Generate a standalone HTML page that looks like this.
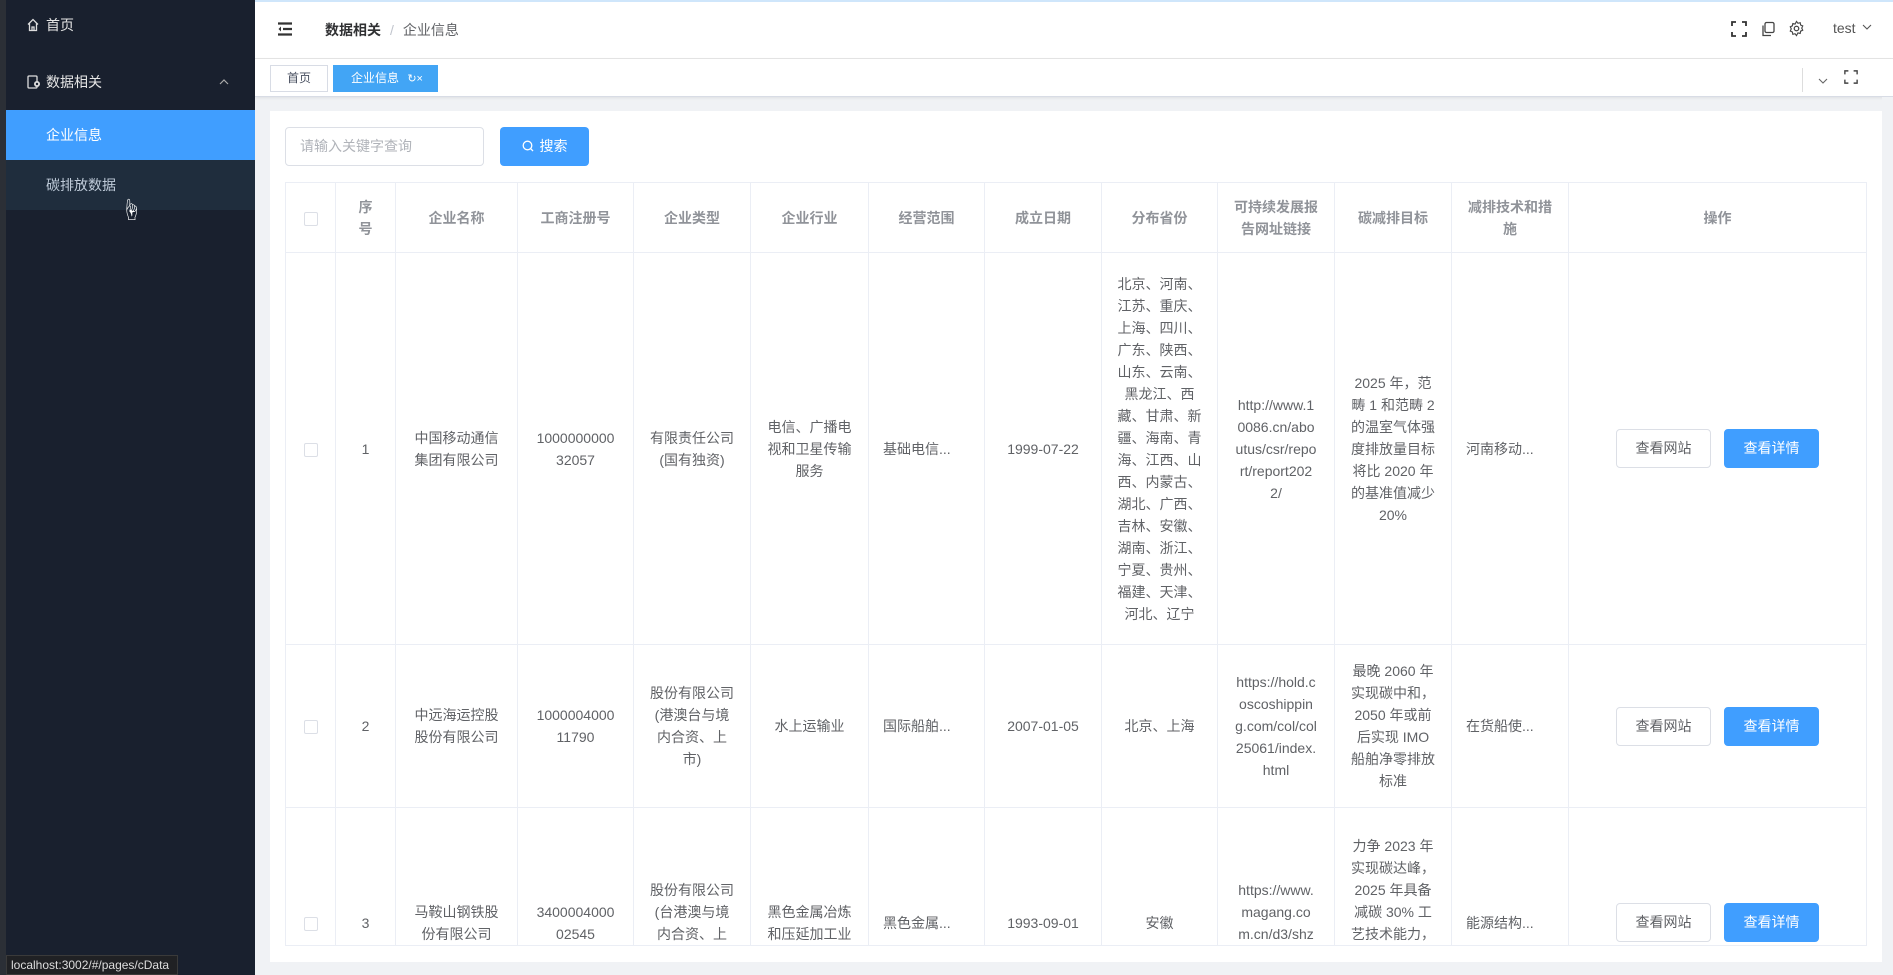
<!DOCTYPE html>
<html style="overflow:hidden"><head><meta charset="utf-8"><style>
*{box-sizing:border-box;margin:0;padding:0}
body{width:1893px;height:975px;overflow:hidden;background:#f0f2f5;font-family:"Liberation Sans","Noto Sans CJK SC",sans-serif;font-size:14px;color:#606266;position:relative}
.strip{position:absolute;left:0;top:0;width:6px;height:975px;background:#2b2f36}
.side{position:absolute;left:6px;top:0;width:249px;height:975px;background:#19202e;color:#bfcbd9}
.side .it{position:absolute;left:0;width:249px;height:50px;line-height:50px}
.hdr{position:absolute;left:255px;top:0;width:1638px;height:59px;background:#fff;border-top:2px solid #cfe6fb;border-bottom:1px solid #e6e6e6}
.tabs{position:absolute;left:255px;top:59px;width:1638px;height:38px;background:#fff;border-bottom:1px solid #d8dce5;box-shadow:0 1px 3px rgba(0,0,0,.08)}
.card{position:absolute;left:270px;top:111px;width:1612px;height:851px;background:#fff}
table{position:absolute;left:15px;top:71px;border-collapse:collapse;table-layout:fixed;width:1581px}
td,th{border:1px solid #ebeef5;text-align:center;vertical-align:middle;padding:9px 14px;line-height:22px;font-size:14px;font-weight:normal}
th{color:#909399;font-weight:bold;height:70px;padding:9px 14px}
.cb{display:inline-block;width:14px;height:14px;border:1px solid #dcdfe6;border-radius:2px;background:#fff;vertical-align:middle}
.b1,.b2{display:inline-block;width:95px;height:39px;line-height:37px;border-radius:4px;font-size:14px;vertical-align:middle}
.b1{border:1px solid #dcdfe6;color:#606266;background:#fff}
.b2{background:#409eff;color:#fff;border:1px solid #409eff;margin-left:13px}
.wrap{position:absolute;left:0;top:0;width:1612px;height:835px;overflow:hidden}
</style></head><body>
<div class="strip"></div>
<div class="side">
 <div class="it" style="top:0;padding-left:20px;color:#e6e6e6">
  <svg width="14" height="14" viewBox="0 0 14 14" style="vertical-align:-2px;margin-right:6px"><path d="M2 6.5L7 1.5L12 6.5M3.5 5V12.5H10.5V5M6 12.5V9H8V12.5" fill="none" stroke="#ddd" stroke-width="1.3"/></svg>首页</div>
 <div class="it" style="top:57px;padding-left:20px;color:#e6e6e6">
  <svg width="16" height="16" viewBox="0 0 16 16" style="vertical-align:-3px;margin-right:4px"><rect x="2" y="2" width="9" height="12" rx="1" fill="none" stroke="#ddd" stroke-width="1.3"/><circle cx="11" cy="10" r="3" fill="#ddd"/><circle cx="11" cy="10" r="1.2" fill="#19202e"/></svg>数据相关
  <span style="position:absolute;right:26px;top:0;font-size:11px;color:#aaa">
   <svg width="10" height="6" viewBox="0 0 10 6"><path d="M1 5L5 1L9 5" fill="none" stroke="#aaa" stroke-width="1.2"/></svg></span></div>
 <div class="it" style="top:110px;background:#409eff;color:#fff;padding-left:40px">企业信息</div>
 <div class="it" style="top:160px;background:#1f2d3d;color:#bfcbd9;padding-left:40px">碳排放数据</div>
</div>
<div style="position:absolute;left:120px;top:193px;font-size:22px;color:#fff">☝</div>
<div class="hdr">
 <svg width="16" height="14" viewBox="0 0 16 14" style="position:absolute;left:22px;top:20px"><path d="M1 1.5H15M6 7H15M1 12.5H15" stroke="#333" stroke-width="2.2"/><path d="M4 4.5L1.5 7L4 9.5Z" fill="#333"/></svg>
 <div style="position:absolute;left:70px;top:18px;font-size:14px;color:#303133"><b>数据相关</b><span style="color:#c0c4cc;margin:0 9px">/</span><span style="color:#606266">企业信息</span></div>
 <svg width="16" height="16" viewBox="0 0 16 16" style="position:absolute;left:1476px;top:19px"><path d="M1 5V1H5M11 1H15V5M15 11V15H11M5 15H1V11" fill="none" stroke="#333" stroke-width="1.8"/></svg>
 <svg width="16" height="16" viewBox="0 0 16 16" style="position:absolute;left:1505px;top:19px"><rect x="5" y="1.5" width="9" height="10" rx="1.5" fill="none" stroke="#444" stroke-width="1.3"/><path d="M3 4.5V14.5H11" fill="none" stroke="#444" stroke-width="1.3"/></svg>
 <svg width="17" height="17" viewBox="0 0 24 24" style="position:absolute;left:1533px;top:18px"><circle cx="12" cy="12" r="3.2" fill="none" stroke="#444" stroke-width="1.8"/><path d="M12 2l2 2.6 3.2-.8.6 3.2 3 1.4-1.4 3 1.4 3-3 1.4-.6 3.2-3.2-.8L12 22l-2-2.6-3.2.8-.6-3.2-3-1.4 1.4-3-1.4-3 3-1.4.6-3.2 3.2.8z" fill="none" stroke="#444" stroke-width="1.6"/></svg>
 <div style="position:absolute;left:1578px;top:18px;font-size:14px;color:#555">test <svg width="10" height="6" viewBox="0 0 10 6" style="vertical-align:3px;margin-left:3px"><path d="M1 1L5 5L9 1" fill="none" stroke="#555" stroke-width="1.1"/></svg></div>
</div>
<div class="tabs">
 <div style="position:absolute;left:15px;top:6px;width:58px;height:27px;border:1px solid #d8dce5;background:#fff;font-size:12px;color:#495060;text-align:center;line-height:25px">首页</div>
 <div style="position:absolute;left:78px;top:6px;width:105px;height:27px;background:#42a5f5;border:1px solid #42a5f5;font-size:12px;color:#fff;line-height:25px;padding-left:17px">企业信息 <span style="margin-left:5px;font-size:11px">↻×</span></div>
 <div style="position:absolute;left:1547px;top:9px;width:1px;height:24px;background:#ddd"></div>
 <svg width="10" height="6" viewBox="0 0 10 6" style="position:absolute;left:1563px;top:19px"><path d="M1 1L5 5L9 1" fill="none" stroke="#666" stroke-width="1.1"/></svg>
 <svg width="14" height="14" viewBox="0 0 16 16" style="position:absolute;left:1589px;top:11px"><path d="M1 5V1H5M11 1H15V5M15 11V15H11M5 15H1V11" fill="none" stroke="#444" stroke-width="1.6"/></svg>
</div>
<div class="card"><div class="wrap">
 <div style="position:absolute;left:15px;top:16px;width:199px;height:39px;border:1px solid #dcdfe6;border-radius:4px;padding-left:14px;line-height:37px;color:#b0b3b9;font-size:14px">请输入关键字查询</div>
 <div style="position:absolute;left:230px;top:16px;width:89px;height:39px;border-radius:4px;background:#409eff;color:#fff;line-height:39px;text-align:center;font-size:14px"><svg width="12" height="12" viewBox="0 0 12 12" style="vertical-align:-1px;margin-right:6px"><circle cx="5.5" cy="5.5" r="4.3" fill="none" stroke="#fff" stroke-width="1.3"/><path d="M8.6 8.6L11 11" stroke="#fff" stroke-width="1.3"/></svg>搜索</div>
 <table>
 <colgroup><col style="width:50px"><col style="width:60px"><col style="width:122px"><col style="width:116px"><col style="width:117px"><col style="width:118px"><col style="width:116px"><col style="width:117px"><col style="width:116px"><col style="width:117px"><col style="width:117px"><col style="width:117px"><col style="width:298px"></colgroup>
 <tr><th><span class="cb"></span></th><th>序<br>号</th><th>企业名称</th><th>工商注册号</th><th>企业类型</th><th>企业行业</th><th>经营范围</th><th>成立日期</th><th>分布省份</th><th>可持续发展报<br>告网址链接</th><th>碳减排目标</th><th>减排技术和措<br>施</th><th>操作</th></tr>
 <tr style="height:392px"><td><span class="cb"></span></td><td>1</td><td>中国移动通信<br>集团有限公司</td><td>1000000000<br>32057</td><td>有限责任公司<br>(国有独资)</td><td>电信、广播电<br>视和卫星传输<br>服务</td><td style="text-align:left">基础电信...</td><td>1999-07-22</td><td>北京、河南、<br>江苏、重庆、<br>上海、四川、<br>广东、陕西、<br>山东、云南、<br>黑龙江、西<br>藏、甘肃、新<br>疆、海南、青<br>海、江西、山<br>西、内蒙古、<br>湖北、广西、<br>吉林、安徽、<br>湖南、浙江、<br>宁夏、贵州、<br>福建、天津、<br>河北、辽宁</td><td style="padding:9px 6px">http://www.1<br>0086.cn/abo<br>utus/csr/repo<br>rt/report202<br>2/</td><td style="padding:9px 6px">2025 年，范<br>畴 1 和范畴 2<br>的温室气体强<br>度排放量目标<br>将比 2020 年<br>的基准值减少<br>20%</td><td style="text-align:left">河南移动...</td><td><span class="b1">查看网站</span><span class="b2">查看详情</span></td></tr>
 <tr style="height:163px"><td><span class="cb"></span></td><td>2</td><td>中远海运控股<br>股份有限公司</td><td>1000004000<br>11790</td><td>股份有限公司<br>(港澳台与境<br>内合资、上<br>市)</td><td>水上运输业</td><td style="text-align:left">国际船舶...</td><td>2007-01-05</td><td>北京、上海</td><td style="padding:9px 6px">https://hold.c<br>oscoshippin<br>g.com/col/col<br>25061/index.<br>html</td><td style="padding:9px 6px">最晚 2060 年<br>实现碳中和，<br>2050 年或前<br>后实现 IMO<br>船舶净零排放<br>标准</td><td style="text-align:left">在货船使...</td><td><span class="b1">查看网站</span><span class="b2">查看详情</span></td></tr>
 <tr style="height:230px"><td><span class="cb"></span></td><td>3</td><td>马鞍山钢铁股<br>份有限公司</td><td>3400004000<br>02545</td><td>股份有限公司<br>(台港澳与境<br>内合资、上<br>市)</td><td>黑色金属冶炼<br>和压延加工业</td><td style="text-align:left">黑色金属...</td><td>1993-09-01</td><td>安徽</td><td style="padding:9px 6px">https://www.<br>magang.co<br>m.cn/d3/shz<br>rbg/</td><td style="padding:9px 6px">力争 2023 年<br>实现碳达峰，<br>2025 年具备<br>减碳 30% 工<br>艺技术能力，<br>2035 年力争<br>减碳 50%<br>以上</td><td style="text-align:left">能源结构...</td><td><span class="b1">查看网站</span><span class="b2">查看详情</span></td></tr>
 </table>
 <div style="position:absolute;left:15px;top:834px;width:1581px;height:1px;background:#ebeef5"></div>
</div></div>
<div style="position:absolute;left:1882px;top:97px;width:11px;height:878px;background:#f0f2f5"></div>
<div style="position:absolute;left:6px;top:955px;width:172px;height:20px;background:#202124;border:1px solid #3a3a3a;color:#ddd;font-size:12px;line-height:18px;padding-left:4px">localhost:3002/#/pages/cData</div>
</body></html>
